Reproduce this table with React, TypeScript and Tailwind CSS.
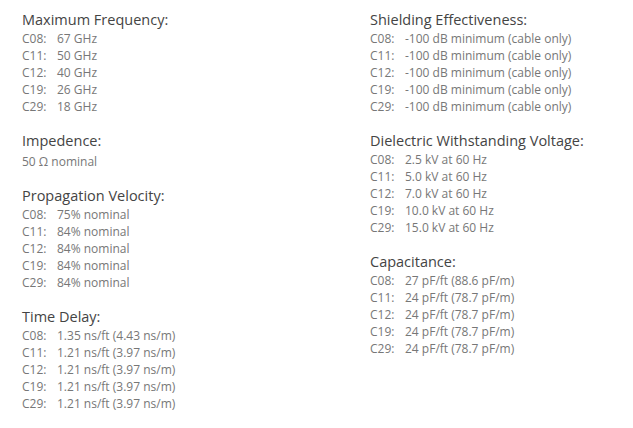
type Spec = {
  title: string;
  rows: [string, string][];
  plain?: string;
};

const left: Spec[] = [
  {
    title: 'Maximum Frequency:',
    rows: [
      ['C08:', '67 GHz'],
      ['C11:', '50 GHz'],
      ['C12:', '40 GHz'],
      ['C19:', '26 GHz'],
      ['C29:', '18 GHz'],
    ],
  },
  { title: 'Impedence:', rows: [], plain: '50 Ω nominal' },
  {
    title: 'Propagation Velocity:',
    rows: [
      ['C08:', '75% nominal'],
      ['C11:', '84% nominal'],
      ['C12:', '84% nominal'],
      ['C19:', '84% nominal'],
      ['C29:', '84% nominal'],
    ],
  },
  {
    title: 'Time Delay:',
    rows: [
      ['C08:', '1.35 ns/ft (4.43 ns/m)'],
      ['C11:', '1.21 ns/ft (3.97 ns/m)'],
      ['C12:', '1.21 ns/ft (3.97 ns/m)'],
      ['C19:', '1.21 ns/ft (3.97 ns/m)'],
      ['C29:', '1.21 ns/ft (3.97 ns/m)'],
    ],
  },
];

const right: Spec[] = [
  {
    title: 'Shielding Effectiveness:',
    rows: [
      ['C08:', '-100 dB minimum (cable only)'],
      ['C11:', '-100 dB minimum (cable only)'],
      ['C12:', '-100 dB minimum (cable only)'],
      ['C19:', '-100 dB minimum (cable only)'],
      ['C29:', '-100 dB minimum (cable only)'],
    ],
  },
  {
    title: 'Dielectric Withstanding Voltage:',
    rows: [
      ['C08:', '2.5 kV at 60 Hz'],
      ['C11:', '5.0 kV at 60 Hz'],
      ['C12:', '7.0 kV at 60 Hz'],
      ['C19:', '10.0 kV at 60 Hz'],
      ['C29:', '15.0 kV at 60 Hz'],
    ],
  },
  {
    title: 'Capacitance:',
    rows: [
      ['C08:', '27 pF/ft (88.6 pF/m)'],
      ['C11:', '24 pF/ft (78.7 pF/m)'],
      ['C12:', '24 pF/ft (78.7 pF/m)'],
      ['C19:', '24 pF/ft (78.7 pF/m)'],
      ['C29:', '24 pF/ft (78.7 pF/m)'],
    ],
  },
];

function Section({ spec }: { spec: Spec }) {
  return (
    <div className="mb-4">
      <h3 className="text-[14.5px] leading-[20px] text-[#444444] font-normal">{spec.title}</h3>
      {spec.plain && <p className="pt-[2px] text-[12px] leading-[17px] text-[#777777]">{spec.plain}</p>}
      {spec.rows.map(([label, value]) => (
        <div key={label} className="flex text-[12px] leading-[17px] text-[#777777]">
          <span className="w-[35px] shrink-0">{label}</span>
          <span>{value}</span>
        </div>
      ))}
    </div>
  );
}

export default function App() {
  return (
    <div
      className="w-[633px] h-[428px] bg-white pl-[22px] pt-[10px] flex"
      style={{ fontFamily: '"Open Sans", "Liberation Sans", sans-serif' }}
    >
      <div className="w-[348px] shrink-0">
        {left.map((s) => (
          <Section key={s.title} spec={s} />
        ))}
      </div>
      <div className="flex-1">
        {right.map((s) => (
          <Section key={s.title} spec={s} />
        ))}
      </div>
    </div>
  );
}
